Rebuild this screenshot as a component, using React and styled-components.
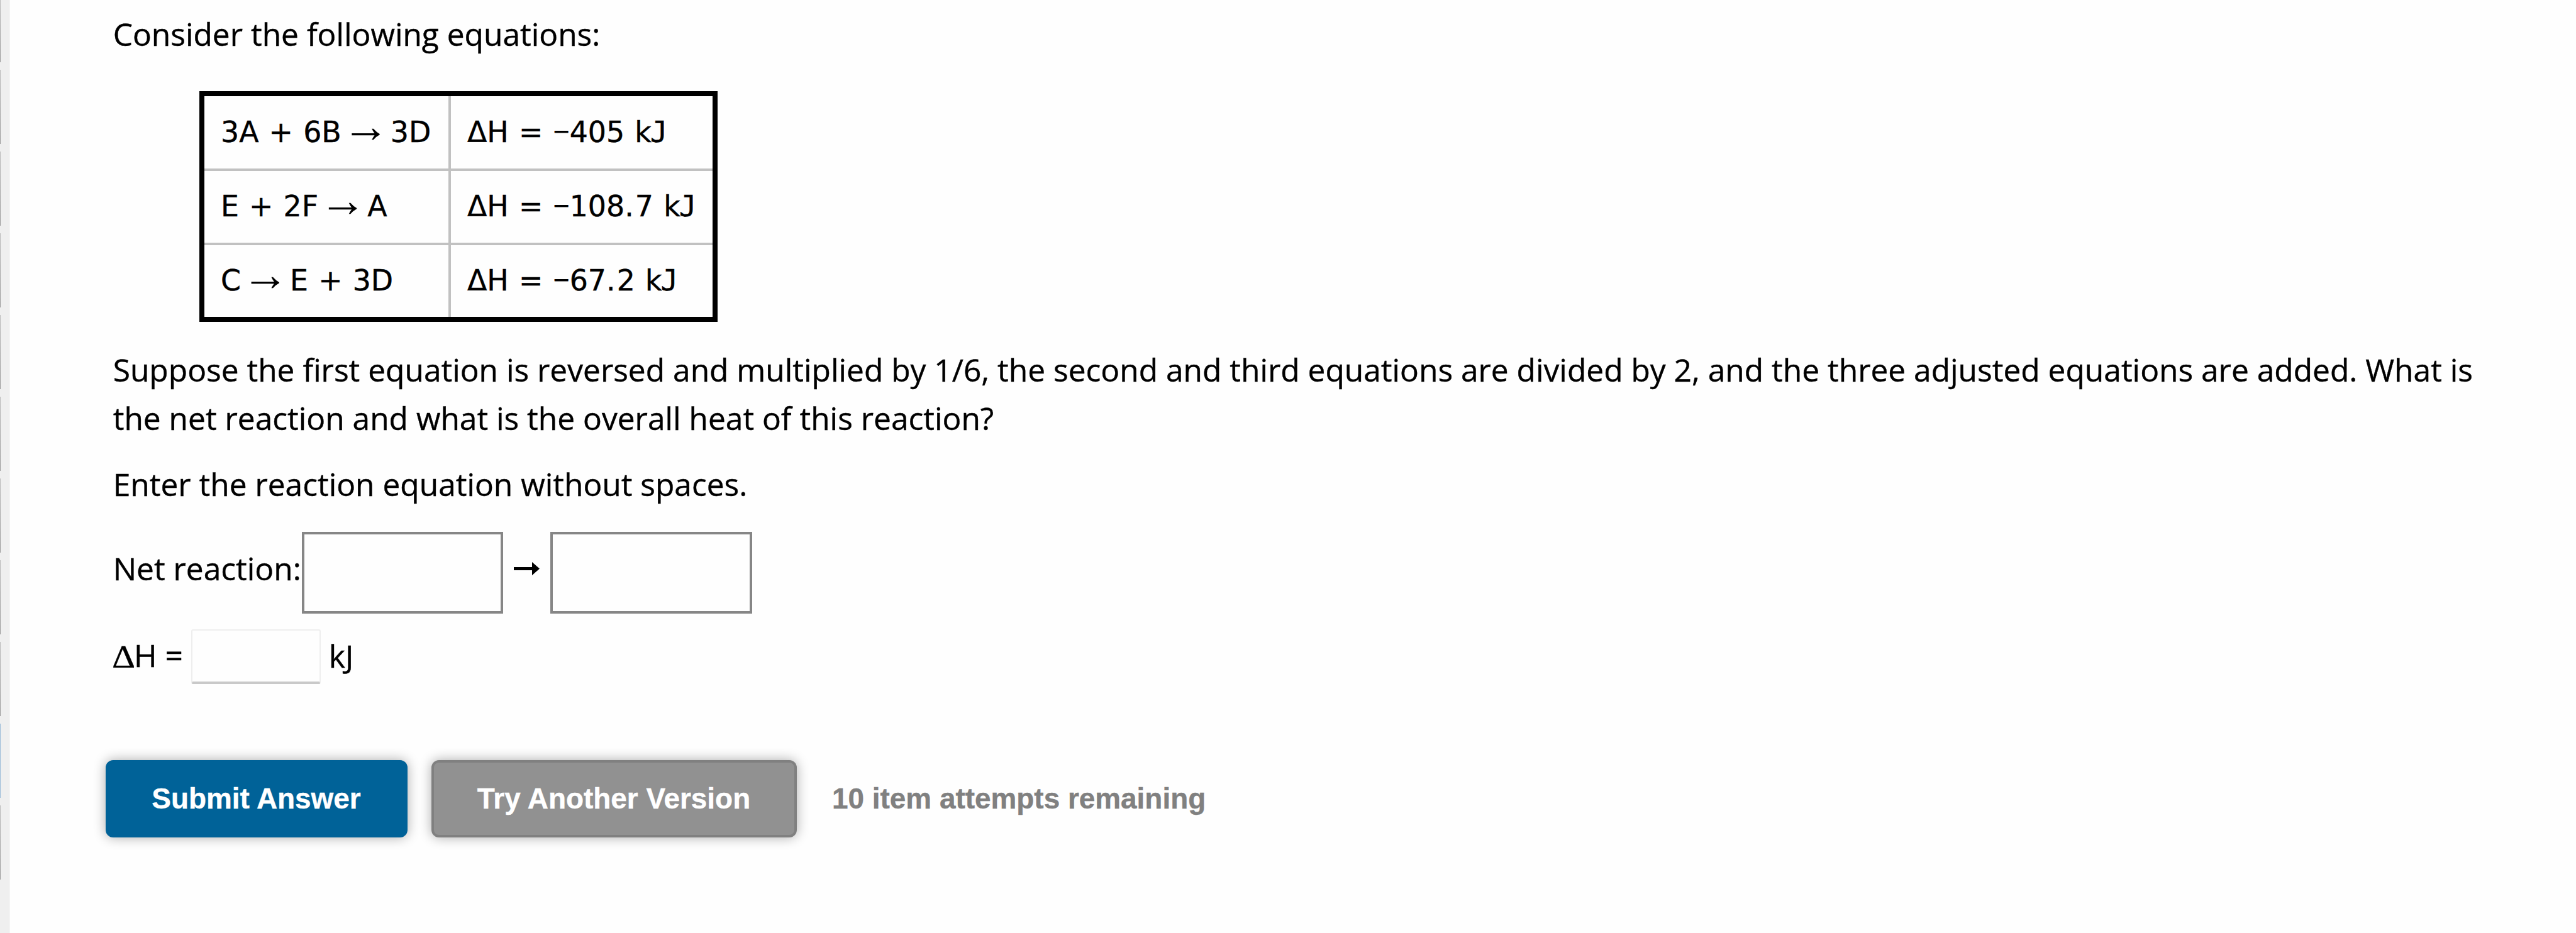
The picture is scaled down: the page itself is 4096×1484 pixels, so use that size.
import styled, { createGlobalStyle } from "styled-components";

const GlobalStyle = createGlobalStyle`
  * {
    box-sizing: border-box;
  }

  body {
    margin: 0;
    background: #fefefe;
  }
`;

const Page = styled.div`
  display: flex;
  height: 1484px;
  overflow: hidden;
  color: #000;
  font-family: "Open Sans", "Noto Sans", sans-serif;
  font-size: 49.66px;
  line-height: 76.4px;
  -webkit-text-stroke: 0.4px;
`;

// strip on the left with the edges of the question tabs
const Rail = styled.div`
  width: 16px;
  flex-shrink: 0;
  background: #efefef;
  border-right: 1px solid #f5f5f5;
  display: flex;
  flex-direction: column;
  gap: 12px;
`;

const Tab = styled.div`
  width: 1px;
  height: ${(p) => (p.$first ? 99 : 118)}px;
  background: ${(p) =>
    p.$active ? "#9bbcd9" : "linear-gradient(#bdbdbd, #9a9a9a)"};
`;

const Content = styled.main`
  flex: 1;
  padding: 15.6px 0 0 163.7px;
`;

const Text = styled.p`
  margin: 0;
  white-space: nowrap;
  padding-top: ${(p) => p.$top || 0}px;
`;

const EquationTable = styled.div`
  display: grid;
  grid-template-columns: 388px 416px;
  grid-template-rows: 115px 114px 114px;
  gap: 4px;
  width: 824px;
  margin: 53px 0 0 137.3px;
  border: 8px solid #000;
  background: #c1c1c1;
`;

const Cell = styled.div`
  background: #fefefe;
  padding: 0 0 2px 26px;
  display: flex;
  align-items: center;
  white-space: pre;
  font-family: "DejaVu Sans", sans-serif;
  font-size: 45.84px;
  line-height: 54px;
  word-spacing: 0.034em;
`;

const LongArrow = styled.span`
  display: inline-flex;
  justify-content: center;
  width: 45.84px;
  height: 54px;
  vertical-align: bottom;
  font-family: "Liberation Sans", sans-serif;
  font-size: 75px;
  line-height: 34px;
  -webkit-text-stroke: 0;
`;

const Minus = styled.span`
  font-family: "Open Sans", sans-serif;
  line-height: 1px;
`;

const Jay = styled.span`
  font-family: "DejaVu Sans Mono", monospace;
  margin-left: -2px;
`;

const Dot = styled.span`
  letter-spacing: 0.046em;
`;

const Row = styled.div`
  display: flex;
  align-items: center;
  height: ${(p) => p.$height}px;
  margin-top: ${(p) => p.$top}px;
  white-space: pre;
`;

const Label = styled.span`
  padding-bottom: ${(p) => p.$raise}px;
  margin-right: ${(p) => p.$right || 0}px;
`;

const ReactionInput = styled.input`
  width: ${(p) => p.$width}px;
  height: 130px;
  border: 4px solid #868686;
  background: #fefefe;
  padding: 0;
  margin: 0;
  outline: none;
`;

const YieldsArrow = styled.svg`
  width: 41px;
  height: 21px;
  margin: 0 17px 13px;
`;

const HeatInput = styled.input`
  width: 206px;
  height: 87px;
  border: 2px solid #eee;
  border-bottom: 4px solid #c9c9c9;
  border-radius: 3px;
  background: #fefefe;
  padding: 0;
  margin: 0;
  outline: none;
`;

// a wider, contrasted delta than the body font has
const Delta = styled.span`
  display: inline-flex;
  justify-content: center;
  width: 33.4px;
  font-family: "Liberation Serif", serif;
  font-size: 50.5px;
  transform: scaleX(1.13);
`;

const Buttons = styled.div`
  display: flex;
  align-items: center;
  margin: 121px 0 0 -11.7px;
  font-family: "Liberation Sans", Arial, sans-serif;
  font-size: 45.9px;
  font-weight: bold;
`;

const Button = styled.button`
  width: ${(p) => p.$width}px;
  height: 123px;
  margin: 0 ${(p) => p.$right}px 0 0;
  padding: 0 1px 2px 0;
  border: 4px solid ${(p) => (p.$primary ? "#006298" : "#808080")};
  border-radius: 12px;
  background: ${(p) => (p.$primary ? "#006298" : "#919191")};
  box-shadow: 0 0 19px rgba(0, 0, 0, 0.33);
  color: #fff;
  font: inherit;
  line-height: 52px;
`;

const Attempts = styled.span`
  color: #808080;
  padding-bottom: 2px;
`;

const equations = [
  ["3A + 6B → 3D", "ΔH = −405 kJ"],
  ["E + 2F → A", "ΔH = −108.7 kJ"],
  ["C → E + 3D", "ΔH = −67.2 kJ"],
];

const tabs = Array.from({ length: 11 }, (_, i) => i);

const glyphs = { "→": LongArrow, "−": Minus, J: Jay, ".": Dot };

function Formula({ text }) {
  return (
    <span>
      {text.split(/([→−J.])/).map((part, i) => {
        const Glyph = glyphs[part];
        return Glyph ? <Glyph key={i}>{part}</Glyph> : part;
      })}
    </span>
  );
}

export default function App() {
  return (
    <Page>
      <GlobalStyle />
      <Rail>
        {tabs.map((i) => (
          <Tab key={i} $first={i === 0} $active={i === 9} />
        ))}
      </Rail>
      <Content>
        <Text>Consider the following equations:</Text>
        <EquationTable>
          {equations.flat().map((text) => (
            <Cell key={text}>
              <Formula text={text} />
            </Cell>
          ))}
        </EquationTable>
        <Text $top={38.4}>
          Suppose the first equation is reversed and multiplied by 1/6, the
          second and third equations are divided by 2, and the three adjusted
          equations are added. What is
          <br />
          the net reaction and what is the overall heat of this reaction?
        </Text>
        <Text $top={28.6}>Enter the reaction equation without spaces.</Text>
        <Row $top={38.1} $height={130}>
          <Label $raise={15} $right={1.3}>
            Net reaction:
          </Label>
          <ReactionInput $width={320} />
          <YieldsArrow viewBox="0 0 41 21">
            <path d="M0 8h29V0l12 10.5L29 21v-8H0z" />
          </YieldsArrow>
          <ReactionInput $width={321} />
        </Row>
        <Row $top={25} $height={87}>
          <Label $raise={3}>
            <Delta>Δ</Delta>H ={" "}
          </Label>
          <HeatInput />
          <Label $raise={3}> kJ</Label>
        </Row>
        <Buttons>
          <Button $primary $width={480} $right={38}>
            Submit Answer
          </Button>
          <Button $width={581} $right={56}>
            Try Another Version
          </Button>
          <Attempts>10 item attempts remaining</Attempts>
        </Buttons>
      </Content>
    </Page>
  );
}
